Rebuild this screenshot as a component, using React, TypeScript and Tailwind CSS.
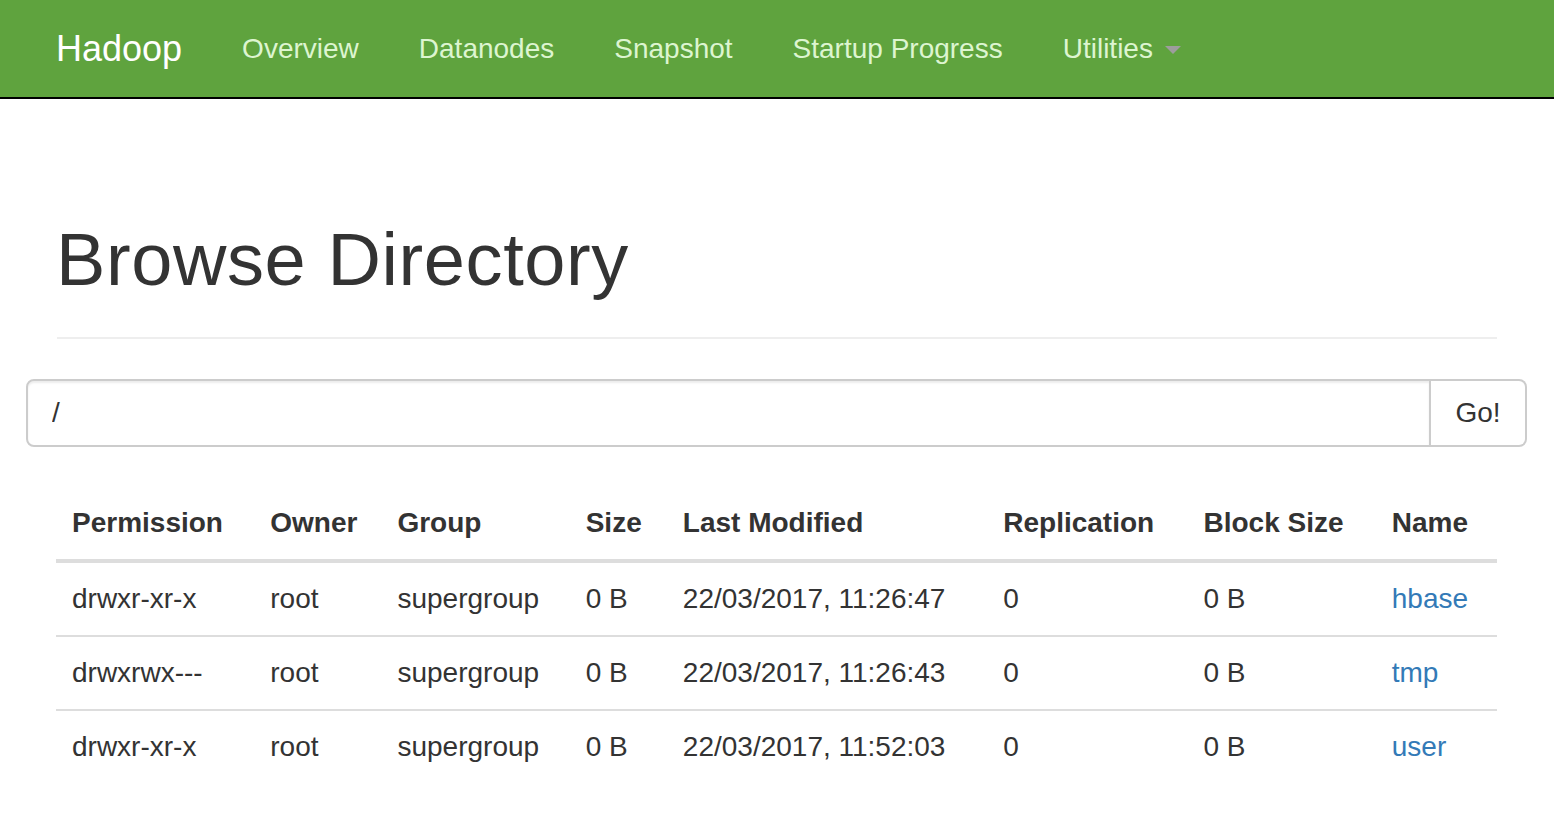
import React from 'react';

type Entry = {
  permission: string;
  owner: string;
  group: string;
  size: string;
  modified: string;
  replication: string;
  blockSize: string;
  name: string;
};

const entries: Entry[] = [
  { permission: 'drwxr-xr-x', owner: 'root', group: 'supergroup', size: '0 B', modified: '22/03/2017, 11:26:47', replication: '0', blockSize: '0 B', name: 'hbase' },
  { permission: 'drwxrwx---', owner: 'root', group: 'supergroup', size: '0 B', modified: '22/03/2017, 11:26:43', replication: '0', blockSize: '0 B', name: 'tmp' },
  { permission: 'drwxr-xr-x', owner: 'root', group: 'supergroup', size: '0 B', modified: '22/03/2017, 11:52:03', replication: '0', blockSize: '0 B', name: 'user' },
];

const columns = [
  { label: 'Permission', width: 'w-[198px]' },
  { label: 'Owner', width: 'w-[127px]' },
  { label: 'Group', width: 'w-[188px]' },
  { label: 'Size', width: 'w-[97px]' },
  { label: 'Last Modified', width: 'w-[320px]' },
  { label: 'Replication', width: 'w-[200px]' },
  { label: 'Block Size', width: 'w-[188px]' },
  { label: 'Name', width: 'w-[121px]' },
];

const navLinks = ['Overview', 'Datanodes', 'Snapshot', 'Startup Progress'];

const Navbar = () => (
  <nav className="h-[99px] bg-[#5fa33e] border-b-2 border-black">
    <div className="w-[1500px] mx-auto flex items-center h-full">
      <a href="#" className="pl-[29px] pr-[30px] text-[36px] leading-[40px] text-white">
        Hadoop
      </a>
      <ul className="flex items-center">
        {navLinks.map((link) => (
          <li key={link}>
            <a href="#" className="block px-[30px] text-[28px] leading-[40px] text-[#ddf5d0]">
              {link}
            </a>
          </li>
        ))}
        <li>
          <a href="#" className="flex items-center px-[30px] text-[28px] leading-[40px] text-[#ddf5d0]">
            Utilities
            <span className="ml-[12px] mt-[2px] w-0 h-0 border-l-[8px] border-r-[8px] border-t-[8px] border-l-transparent border-r-transparent border-t-[#9d9d9d]" />
          </a>
        </li>
      </ul>
    </div>
  </nav>
);

const App = () => {
  return (
    <div className="min-h-screen bg-white text-[#333] font-['Liberation_Sans',Arial,sans-serif]">
      <Navbar />
      <div className="w-[1500px] mx-auto">
        <div className="mx-[30px] pt-[121px] pb-[18px] mb-[40px] border-b-2 border-[#eee]">
          <h1 className="text-[74px] leading-[79px] font-normal tracking-[0.6px] -ml-[1px] mb-[20px]">Browse Directory</h1>
        </div>

        <div className="flex h-[68px] -ml-[1px]">
          <input
            defaultValue="/"
            className="flex-1 h-full px-[24px] text-[28px] text-[#333] border-2 border-[#ccc] rounded-l-[8px] shadow-[inset_0_2px_2px_rgba(0,0,0,0.075)] outline-none"
          />
          <button className="w-[96px] h-full text-[28px] text-[#333] bg-white border-2 border-l-0 border-[#ccc] rounded-r-[8px]">
            Go!
          </button>
        </div>

        <div className="pl-[29px] pr-[30px] mt-[40px]">
          <table className="w-full table-fixed border-collapse text-[28px] leading-[40px]">
            <thead>
              <tr className="border-b-4 border-[#ddd]">
                {columns.map((col) => (
                  <th key={col.label} className={`${col.width} p-[16px] text-left font-bold`}>
                    {col.label}
                  </th>
                ))}
              </tr>
            </thead>
            <tbody>
              {entries.map((e, i) => (
                <tr key={e.name} className={i > 0 ? 'border-t-2 border-[#ddd]' : ''}>
                  <td className="p-[16px] whitespace-nowrap">{e.permission}</td>
                  <td className="p-[16px] whitespace-nowrap">{e.owner}</td>
                  <td className="p-[16px] whitespace-nowrap">{e.group}</td>
                  <td className="p-[16px] whitespace-nowrap">{e.size}</td>
                  <td className="p-[16px] whitespace-nowrap">{e.modified}</td>
                  <td className="p-[16px] whitespace-nowrap">{e.replication}</td>
                  <td className="p-[16px] whitespace-nowrap">{e.blockSize}</td>
                  <td className="p-[16px] whitespace-nowrap">
                    <a href="#" className="text-[#337ab7]">{e.name}</a>
                  </td>
                </tr>
              ))}
            </tbody>
          </table>
        </div>
      </div>
    </div>
  );
};

export default App;
